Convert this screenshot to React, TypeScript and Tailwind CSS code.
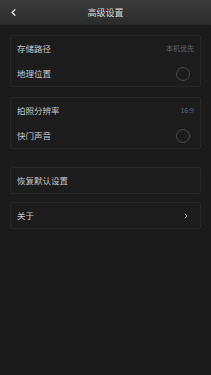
import { ChevronLeft, ChevronRight } from 'lucide-react';

const font = { fontFamily: '"Noto Sans CJK SC", "Noto Sans", sans-serif' };

function Row({ label, right }: { label: string; right?: React.ReactNode }) {
  return (
    <div className="flex h-[25px] items-center justify-between pl-[6px] pr-[6px]">
      <span className="text-[8.5px] leading-none text-[#c8c8c8]">{label}</span>
      {right}
    </div>
  );
}

function Circle() {
  return <div className="mr-[4px] h-[14px] w-[14px] rounded-full border border-[#4a4a4a]" />;
}

function Card({ children }: { children: React.ReactNode }) {
  return (
    <div className="mx-[10px] rounded-[2px] border border-[#262626] bg-[#1c1c1c]">
      {children}
    </div>
  );
}

export default function App() {
  return (
    <div className="h-[375px] w-[211px] overflow-hidden bg-[#1b1b1b]" style={font}>
      {/* Header */}
      <header className="relative flex h-[25px] items-center justify-center bg-gradient-to-b from-[#3b3b3b] to-[#2b2b2b]">
        <ChevronLeft className="absolute left-[8px] top-[7px] h-[11px] w-[11px] text-[#e0e0e0]" strokeWidth={3} />
        <span className="text-[9px] leading-none text-[#d6d6d6]">高级设置</span>
      </header>

      <div className="mt-[10px] flex flex-col">
        <Card>
          <Row label="存储路径" right={<span className="text-[7px] leading-none text-[#666]">本机优先</span>} />
          <Row label="地理位置" right={<Circle />} />
        </Card>

        <div className="h-[10px]" />

        <Card>
          <Row label="拍照分辨率" right={<span className="text-[7px] leading-none text-[#666]">16:9</span>} />
          <Row label="快门声音" right={<Circle />} />
        </Card>

        <div className="h-[18px]" />

        <Card>
          <Row label="恢复默认设置" />
        </Card>

        <div className="h-[8px]" />

        <Card>
          <Row
            label="关于"
            right={<ChevronRight className="mr-[4px] h-[8px] w-[8px] text-[#8a8a8a]" strokeWidth={3} />}
          />
        </Card>
      </div>
    </div>
  );
}
